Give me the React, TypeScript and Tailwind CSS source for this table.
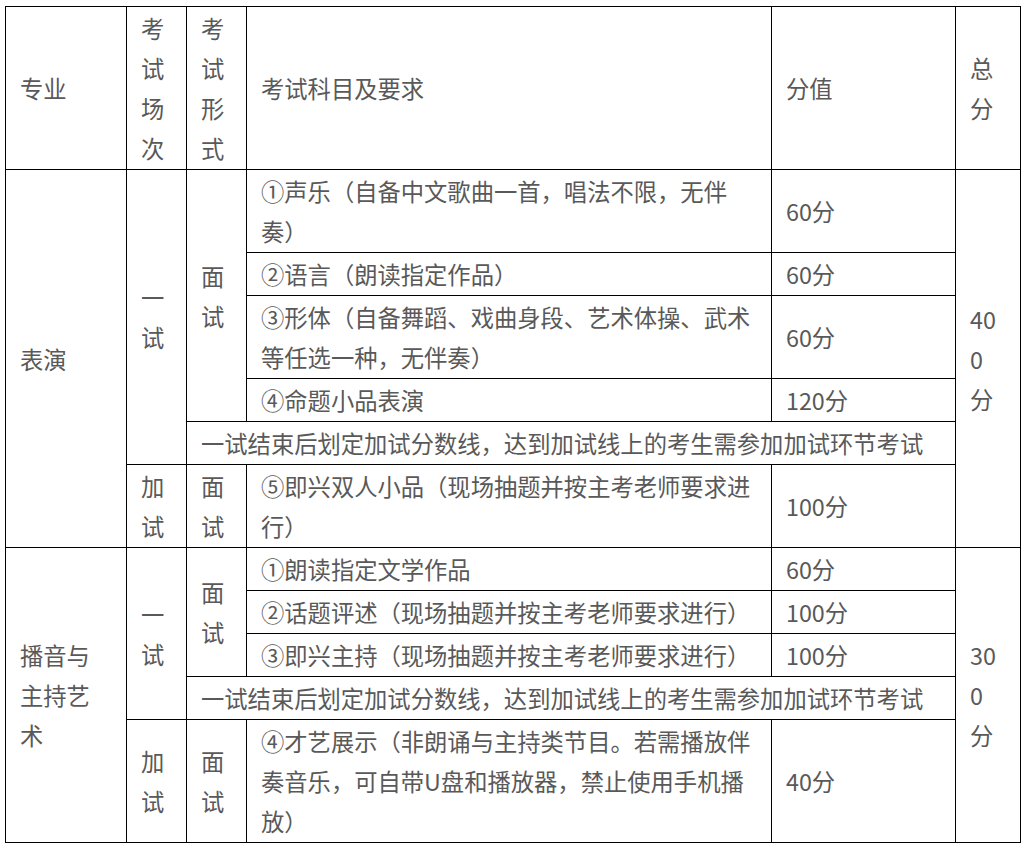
import React from 'react';

const cell =
  'border border-black px-[14px] py-px align-middle text-left font-normal';

const App: React.FC = () => {
  return (
    <div
      className="bg-white pl-[5px] pt-[6px] text-[#595959] text-[23.3px] leading-[40px] min-h-[847px]"
      style={{ fontFamily: '"Noto Sans CJK SC", "Noto Sans", sans-serif' }}
    >
      <table className="border-collapse table-fixed w-[1015px]">
        <colgroup>
          <col className="w-[121px]" />
          <col className="w-[60px]" />
          <col className="w-[60px]" />
          <col className="w-[525px]" />
          <col className="w-[184px]" />
          <col className="w-[65px]" />
        </colgroup>
        <tbody>
          <tr>
            <td className={cell}>专业</td>
            <td className={cell}>考试场次</td>
            <td className={cell}>考试形式</td>
            <td className={cell}>考试科目及要求</td>
            <td className={cell}>分值</td>
            <td className={cell}>总分</td>
          </tr>

          {/* 表演 */}
          <tr>
            <td className={cell} rowSpan={6}>表演</td>
            <td className={cell} rowSpan={5}>一试</td>
            <td className={cell} rowSpan={4}>面试</td>
            <td className={cell}>①声乐（自备中文歌曲一首，唱法不限，无伴奏）</td>
            <td className={cell}>60分</td>
            <td className={`${cell} break-all`} rowSpan={6}>400分</td>
          </tr>
          <tr>
            <td className={cell}>②语言（朗读指定作品）</td>
            <td className={cell}>60分</td>
          </tr>
          <tr>
            <td className={cell}>③形体（自备舞蹈、戏曲身段、艺术体操、武术等任选一种，无伴奏）</td>
            <td className={cell}>60分</td>
          </tr>
          <tr>
            <td className={cell}>④命题小品表演</td>
            <td className={cell}>120分</td>
          </tr>
          <tr>
            <td className={cell} colSpan={3}>
              一试结束后划定加试分数线，达到加试线上的考生需参加加试环节考试
            </td>
          </tr>
          <tr>
            <td className={cell}>加试</td>
            <td className={cell}>面试</td>
            <td className={cell}>⑤即兴双人小品（现场抽题并按主考老师要求进行）</td>
            <td className={cell}>100分</td>
          </tr>

          {/* 播音与主持艺术 */}
          <tr>
            <td className={cell} rowSpan={5}>播音与主持艺术</td>
            <td className={cell} rowSpan={4}>一试</td>
            <td className={cell} rowSpan={3}>面试</td>
            <td className={cell}>①朗读指定文学作品</td>
            <td className={cell}>60分</td>
            <td className={`${cell} break-all`} rowSpan={5}>300分</td>
          </tr>
          <tr>
            <td className={cell}>②话题评述（现场抽题并按主考老师要求进行）</td>
            <td className={cell}>100分</td>
          </tr>
          <tr>
            <td className={cell}>③即兴主持（现场抽题并按主考老师要求进行）</td>
            <td className={cell}>100分</td>
          </tr>
          <tr>
            <td className={cell} colSpan={3}>
              一试结束后划定加试分数线，达到加试线上的考生需参加加试环节考试
            </td>
          </tr>
          <tr>
            <td className={cell}>加试</td>
            <td className={cell}>面试</td>
            <td className={cell}>
              ④才艺展示（非朗诵与主持类节目。若需播放伴奏音乐，可自带U盘和播放器，禁止使用手机播放）
            </td>
            <td className={cell}>40分</td>
          </tr>
        </tbody>
      </table>
    </div>
  );
};

export default App;
